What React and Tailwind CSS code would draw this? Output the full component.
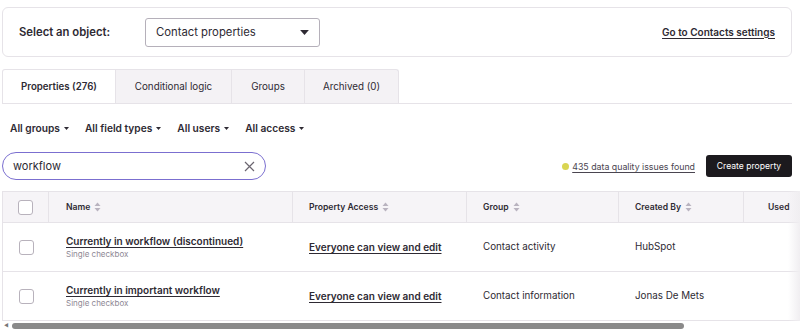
import React from 'react';

const SortIcon = () => (
  <svg width="7" height="10" viewBox="0 0 7 10" className="ml-1 inline-block">
    <path d="M3.5 0.5 L6.5 4 L0.5 4 Z" fill="#b9b3bf" />
    <path d="M3.5 9.5 L6.5 6 L0.5 6 Z" fill="#b9b3bf" />
  </svg>
);

const Caret = ({ big }) => (
  <svg width={big ? 9 : 5} height={big ? 5 : 3} viewBox="0 0 7 4" className="ml-1 inline-block">
    <path d="M0 0 L7 0 L3.5 4 Z" fill="#2e2a33" />
  </svg>
);

const Checkbox = () => (
  <div className="w-[15px] h-[15px] rounded-[3px] border border-[#b8b2bc] bg-white" />
);

const rows = [
  { name: 'Currently in workflow (discontinued)', group: 'Contact activity', by: 'HubSpot' },
  { name: 'Currently in important workflow', group: 'Contact information', by: 'Jonas De Mets' },
];

const App = () => {
  return (
    <div className="w-[800px] h-[336px] bg-white overflow-hidden text-[#2e2a33] font-['Inter',sans-serif]">
      <div className="pt-[7px] px-[2px] pr-[8px]">
        <div className="h-[50px] border border-[#e6e3e8] rounded-md flex items-center pl-4 pr-4">
          <span className="text-[11.3px] font-semibold w-[126px]">Select an object:</span>
          <div className="w-[175px] h-[29px] border border-[#b5b0ba] rounded-[3px] flex items-center justify-between pl-[10px] pr-[10px]">
            <span className="text-[11.3px]">Contact properties</span>
            <Caret big />
          </div>
          <span className="ml-auto text-[10px] font-semibold underline underline-offset-2">Go to Contacts settings</span>
        </div>

        <div className="mt-[12px] flex border-b border-[#e6e3e8] h-[35px]">
          <div className="w-[114px] border border-b-0 border-[#e6e3e8] rounded-tl-[3px] bg-white flex items-center justify-center text-[9.7px] font-semibold pt-[1px]">Properties (276)</div>
          <div className="w-[116px] border-t border-r border-[#e6e3e8] bg-[#f4f2f5] flex items-center justify-center text-[9.8px] pt-[1px]">Conditional logic</div>
          <div className="w-[73px] border-t border-r border-[#e6e3e8] bg-[#f4f2f5] flex items-center justify-center text-[9.8px] pt-[1px]">Groups</div>
          <div className="w-[94px] border-t border-r border-[#e6e3e8] rounded-tr-[3px] bg-[#f4f2f5] flex items-center justify-center text-[9.8px] pt-[1px]">Archived (0)</div>
        </div>

        <div className="mt-[17px] flex items-center gap-[16px] pl-[8px] text-[10.2px] font-semibold">
          <span className="flex items-center">All groups<Caret /></span>
          <span className="flex items-center">All field types<Caret /></span>
          <span className="flex items-center">All users<Caret /></span>
          <span className="flex items-center">All access<Caret /></span>
        </div>

        <div className="mt-[16px] flex items-center">
          <div className="w-[264px] h-[28px] rounded-full border-[1.5px] border-[#7b6fd0] flex items-center justify-between pl-[10px] pr-[10px]">
            <span className="text-[11px]">workflow</span>
            <svg width="11" height="11" viewBox="0 0 11 11">
              <path d="M1 1 L10 10 M10 1 L1 10" stroke="#6b6570" strokeWidth="1.2" />
            </svg>
          </div>
          <div className="ml-auto flex items-center">
            <span className="w-[7px] h-[7px] rounded-full bg-[#d9d552]" />
            <span className="ml-[3px] text-[8.8px] underline underline-offset-2 text-[#4a4550]">435 data quality issues found</span>
            <button className="ml-[11px] h-[22px] w-[86px] bg-[#1c1a1e] text-white rounded-[3px] text-[8.6px]">Create property</button>
          </div>
        </div>
      </div>

      <div className="mt-[11px] ml-[2px] w-[798px] relative">
        <div className="border-l border-t border-[#e6e3e8] flex flex-col">
          <div className="flex h-[31px] bg-[#f6f4f7] border-b border-[#e6e3e8] text-[8.6px] font-semibold">
            <div className="w-[46px] shrink-0 flex items-center justify-center border-r border-[#e6e3e8]"><Checkbox /></div>
            <div className="w-[244px] shrink-0 flex items-center pl-[17px] border-r border-[#e6e3e8]">Name<SortIcon /></div>
            <div className="w-[174px] shrink-0 flex items-center pl-[16px] border-r border-[#e6e3e8]">Property Access<SortIcon /></div>
            <div className="w-[152px] shrink-0 flex items-center pl-[16px] border-r border-[#e6e3e8]">Group<SortIcon /></div>
            <div className="w-[125px] shrink-0 flex items-center pl-[16px] border-r border-[#e6e3e8]">Created By<SortIcon /></div>
            <div className="w-[120px] shrink-0 flex items-center pl-[24px]">Used</div>
          </div>
          {rows.map((r) => (
            <div key={r.name} className="flex h-[49px] border-b border-[#e6e3e8] text-[9.8px]">
              <div className="w-[46px] shrink-0 flex items-center justify-center"><Checkbox /></div>
              <div className="w-[244px] shrink-0 flex flex-col justify-center pl-[17px]">
                <span className="text-[10px] font-semibold underline underline-offset-2 leading-[14px]">{r.name}</span>
                <span className="text-[8px] text-[#8e8894] leading-[12px]">Single checkbox</span>
              </div>
              <div className="w-[174px] shrink-0 flex items-center pl-[16px] text-[10px] font-semibold underline underline-offset-2">Everyone can view and edit</div>
              <div className="w-[152px] shrink-0 flex items-center pl-[16px]">{r.group}</div>
              <div className="w-[125px] shrink-0 flex items-center pl-[16px]">{r.by}</div>
              <div className="w-[120px] shrink-0" />
            </div>
          ))}
        </div>
        <div className="absolute top-0 right-0 w-[12px] h-[130px] bg-gradient-to-l from-[#f0eef1] to-transparent" />
        <div className="flex items-center h-[9px] px-[2px]">
          <span className="text-[5px] text-[#777]">◀</span>
          <div className="ml-[3px] w-[672px] h-[6px] rounded-full bg-[#8a8a8a]" />
        </div>
      </div>
    </div>
  );
};

export default App;
